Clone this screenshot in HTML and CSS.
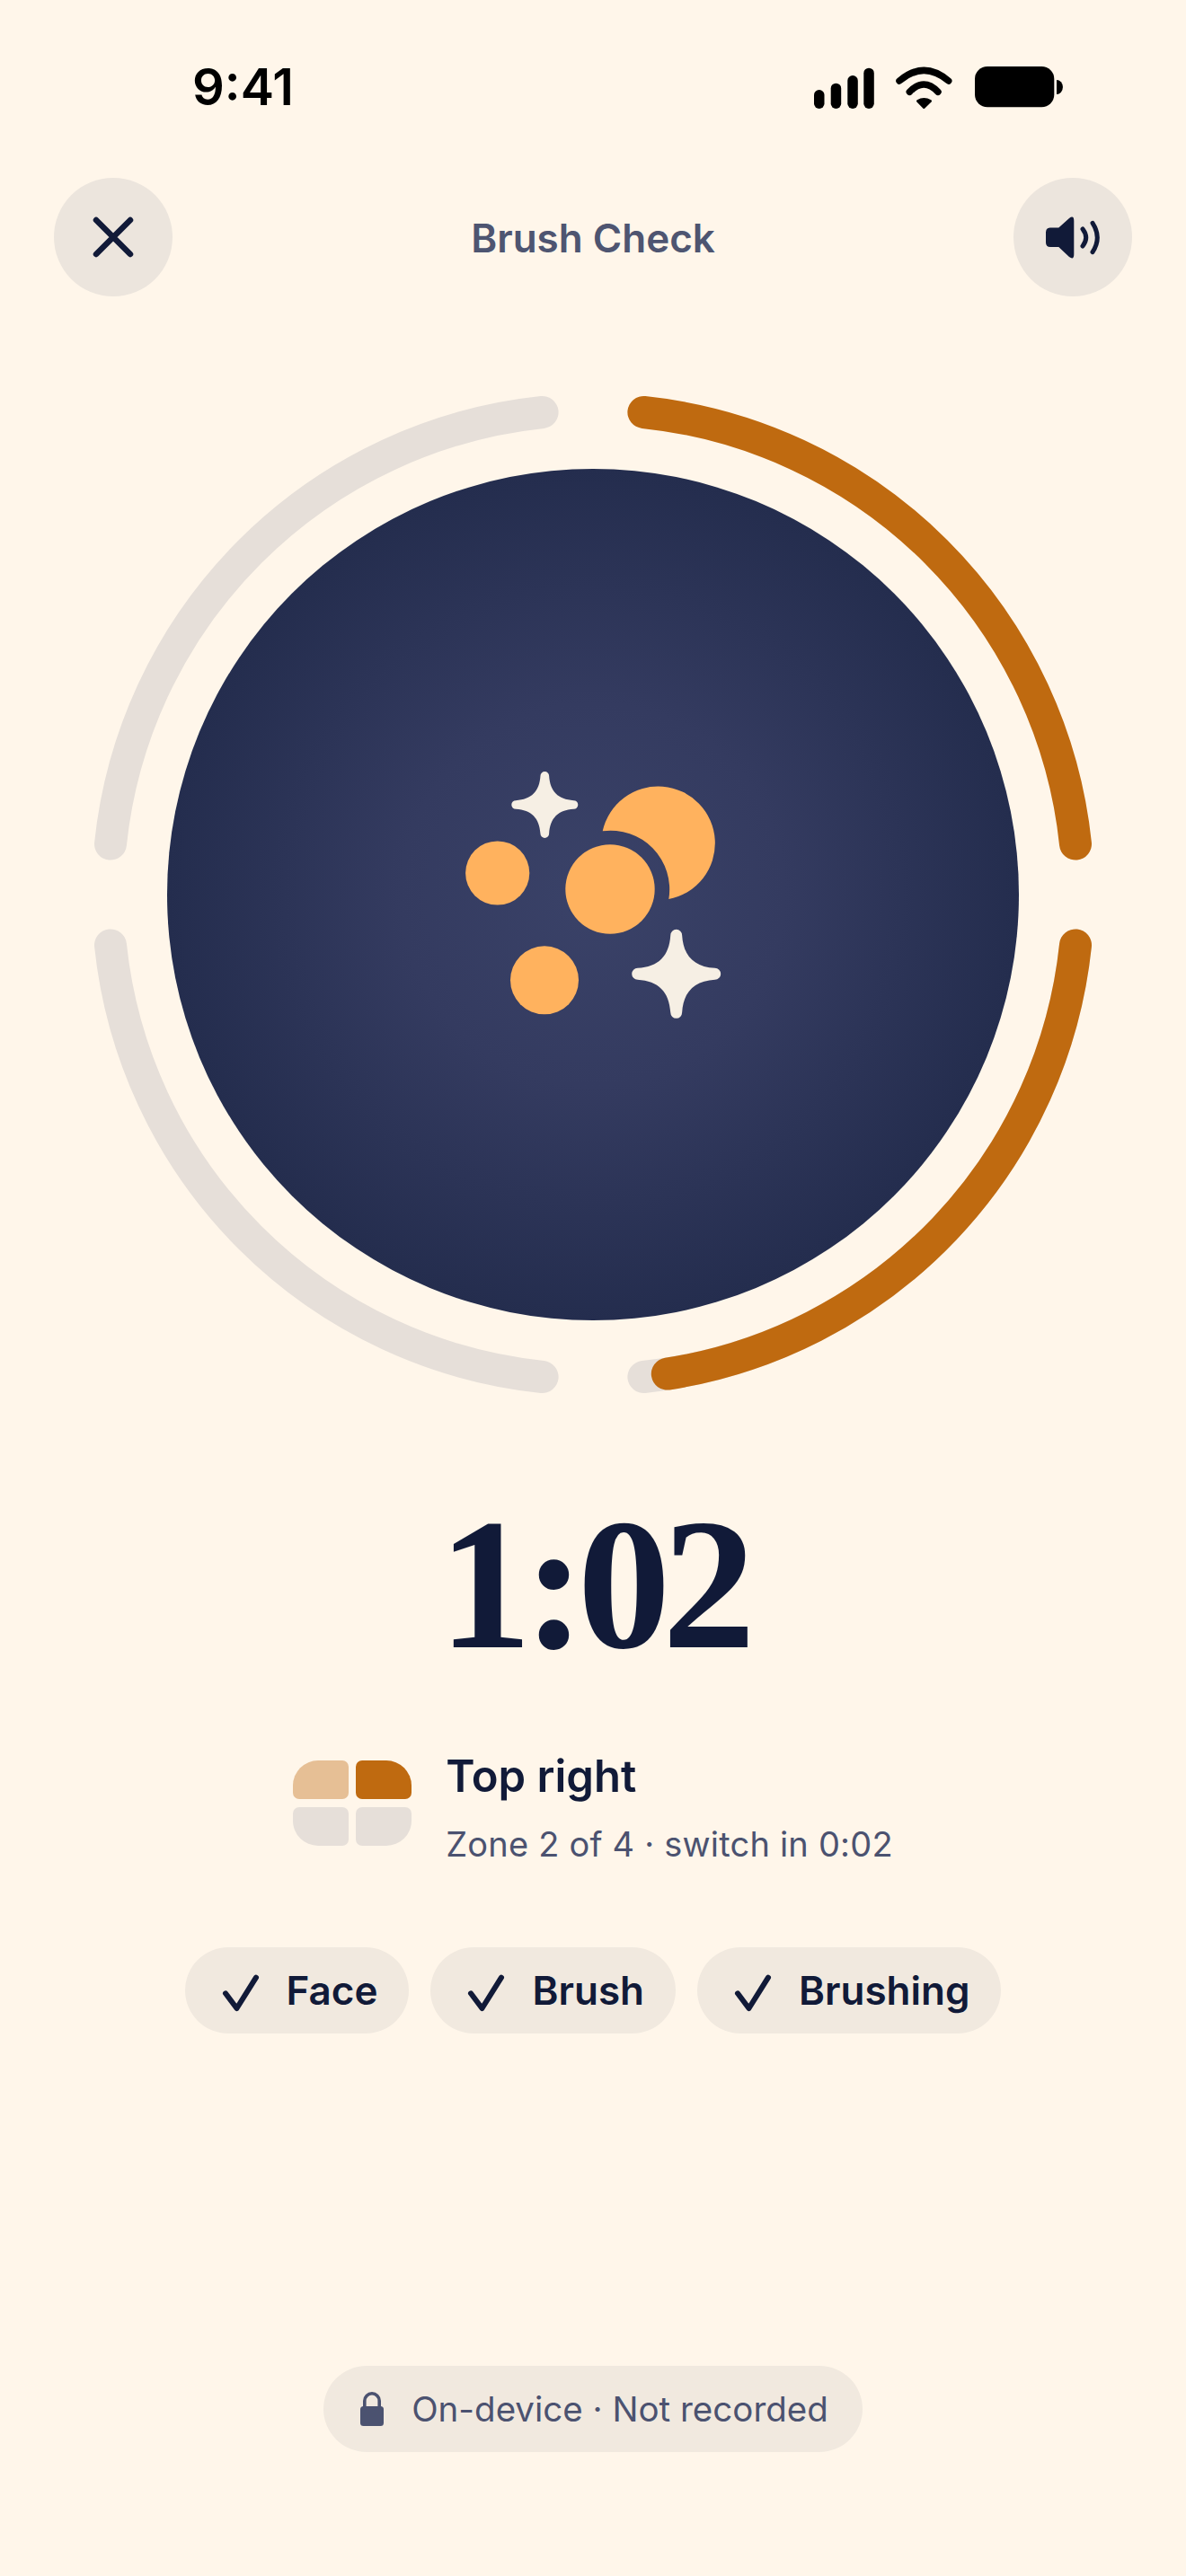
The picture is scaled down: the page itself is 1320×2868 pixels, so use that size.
FILE: index.html
```html
<!DOCTYPE html>
<html lang="en">
<head>
<meta charset="utf-8">
<title>Brush Check</title>
<link rel="stylesheet" href="styles.css">
</head>
<body>
<main class="screen">
  <div class="status">
    <span class="time">9:41</span>
    <svg class="status-icons" viewBox="0 0 280 50" aria-hidden="true">
      <rect x="1" y="26" width="11.5" height="21" rx="5.7"/>
      <rect x="19.7" y="18.7" width="11.5" height="28.3" rx="5.7"/>
      <rect x="38.3" y="10" width="11.5" height="37" rx="5.7"/>
      <rect x="56.3" y="1.7" width="11.5" height="45.3" rx="5.7"/>
      <path class="wifi" d="M96,16 Q123.3,-7.2 150.7,16"/>
      <path class="wifi" d="M107.3,28.3 Q123.2,11.7 139,28.3"/>
      <path class="wifi-dot" d="M116.5,38.5 Q123.3,34.5 130.5,38.5 L123.3,45.5Z"/>
      <rect x="180" y="0" width="88.3" height="45.3" rx="14"/>
      <path d="M271,15 A6.5 7.5 0 0 1 271,31Z"/>
    </svg>
  </div>

  <header class="topbar">
    <button class="round" aria-label="Close">
      <svg class="round-icon" viewBox="0 0 132 132"><path class="stroke-ink" d="M47,47 L85,85 M85,47 L47,85"/></svg>
    </button>
    <h1 class="title">Brush Check</h1>
    <button class="round" aria-label="Sound">
      <svg class="round-icon" viewBox="0 0 132 132">
        <path class="fill-ink" d="M41,55.5 H50.3 L62,45 Q67.3,41 67.3,48 V85 Q67.3,92 62,88 L50.3,77 H41 Q36,77 36,72 V60.5 Q36,55.5 41,55.5Z"/>
        <path class="wave" d="M77,57 Q84.4,66.7 77,76"/>
        <path class="wave" d="M88,50.3 Q98.6,66.7 88,82.7"/>
      </svg>
    </button>
  </header>

  <svg class="dial" viewBox="0 0 1116 1116" role="img" aria-label="Brushing progress">
    <defs>
      <radialGradient id="disc">
        <stop offset="0" stop-color="#3a4268"/>
        <stop offset="0.45" stop-color="#343b60"/>
        <stop offset="1" stop-color="#242d4e"/>
      </radialGradient>
      <path id="star" d="M-.13,-.87 A.13 .13 0 0 1 .13,-.87 C.16,-.4 .4,-.16 .87,-.13 A.13 .13 0 0 1 .87,.13 C.4,.16 .16,.4 .13,.87 A.13 .13 0 0 1 -.13,.87 C-.16,.4 -.4,.16 -.87,.13 A.13 .13 0 0 1 -.87,-.13 C-.4,-.16 -.16,-.4 -.13,-.87Z"/>
    </defs>
    <path class="track" d="M21,501.6 A540 540 0 0 1 501.6,21"/>
    <path class="track" d="M501.6,1095 A540 540 0 0 1 21,614.4"/>
    <path class="track" d="M1095,614.4 A540 540 0 0 1 614.4,1095"/>
    <path class="done" d="M614.4,21 A540 540 0 0 1 1095,501.6"/>
    <path class="done" d="M1095,614.4 A540 540 0 0 1 640.8,1091.6"/>
    <circle cx="558" cy="558" r="474" fill="url(#disc)"/>
    <g transform="translate(-102 -438)">
      <circle class="bubble" cx="553.7" cy="972" r="35.6"/>
      <circle class="bubble" cx="679" cy="990" r="49.7"/>
      <circle class="bubble" cx="606" cy="1091.3" r="38"/>
      <path class="bubble" d="M670.7,925.3 A63.3 63.3 0 1 1 744.3,1001 A65.5 65.5 0 0 0 670.7,925.3Z"/>
      <use href="#star" class="sparkle" transform="translate(606.3 896) scale(37)"/>
      <use href="#star" class="sparkle" transform="translate(752.7 1084.3) scale(49.5)"/>
    </g>
  </svg>

  <div class="timer">1:02</div>

  <section class="zone">
    <div class="quads" aria-hidden="true">
      <span class="quad tl"></span>
      <span class="quad tr"></span>
      <span class="quad bl"></span>
      <span class="quad br"></span>
    </div>
    <div class="zone-text">
      <div class="zone-name">Top right</div>
      <div class="zone-sub">Zone 2 of 4 · switch in 0:02</div>
    </div>
  </section>

  <ul class="chips">
    <li class="chip"><svg class="check" viewBox="0 0 48 48"><path d="M9,27.3 L21.5,44 L43,9.7"/></svg>Face</li>
    <li class="chip"><svg class="check" viewBox="0 0 48 48"><path d="M9,27.3 L21.5,44 L43,9.7"/></svg>Brush</li>
    <li class="chip"><svg class="check" viewBox="0 0 48 48"><path d="M9,27.3 L21.5,44 L43,9.7"/></svg>Brushing</li>
  </ul>

  <footer class="privacy">
    <svg class="lock" viewBox="0 0 26 38" aria-hidden="true">
      <path class="shackle" d="M4.8,18 V10 A8.2 8.2 0 0 1 21.2,10 V18"/>
      <rect x="0" y="16" width="26" height="22" rx="3.5"/>
    </svg>
    <span>On-device · Not recorded</span>
  </footer>
</main>
</body>
</html>
```

FILE: styles.css
```css
* { box-sizing: border-box; }
html, body { margin: 0; padding: 0; }
body { background: #fff6ea; font-family: Inter, "Liberation Sans", sans-serif; color: #111a38; }

.screen {
  width: 1320px;
  height: 2868px;
  display: flex;
  flex-direction: column;
  align-items: center;
  overflow: hidden;
}

.status {
  width: 100%;
  height: 198px;
  padding: 74px 135px 0 214px;
  display: flex;
  justify-content: space-between;
  align-items: flex-start;
}
.time { font-size: 56px; font-weight: 600; line-height: 46px; color: #000; }
.status-icons { width: 280px; height: 50px; fill: #000; }
.wifi { fill: none; stroke: #000; stroke-width: 7.5; stroke-linecap: round; }
.wifi-dot { stroke: #000; stroke-width: 3; stroke-linejoin: round; }

.topbar {
  width: 100%;
  padding: 0 60px;
  display: flex;
  justify-content: space-between;
  align-items: center;
}
.round {
  width: 132px;
  height: 132px;
  padding: 0;
  border: 0;
  border-radius: 50%;
  background: #ece5dd;
  display: flex;
}
.round-icon { width: 132px; height: 132px; }
.title { margin: 2px 0 0; font-size: 44px; font-weight: 600; color: #4e5571; line-height: 56px; }
.stroke-ink { fill: none; stroke: #111a38; stroke-width: 6.5; stroke-linecap: round; }
.fill-ink { fill: #111a38; }
.wave { fill: none; stroke: #111a38; stroke-width: 5; stroke-linecap: round; }

.dial { width: 1116px; height: 1116px; margin-top: 108px; flex: none; }
.track, .done { fill: none; stroke-width: 36; stroke-linecap: round; }
.track { stroke: #e6dfd9; }
.done { stroke: #bf6a10; }
.bubble { fill: #ffb25e; }
.sparkle { fill: #f6efe4; }

.timer {
  margin-top: 91px;
  height: 240px;
  font-family: "Liberation Serif", serif;
  font-weight: 700;
  font-size: 207px;
  line-height: 240px;
  letter-spacing: -9px;
  color: #111a38;
}

.zone {
  margin-top: 64px;
  display: flex;
  align-items: center;
  gap: 38px;
}
.quads {
  width: 132px;
  margin-bottom: 11px;
  display: grid;
  grid-template-columns: 62px 62px;
  grid-template-rows: 43px 43px;
  gap: 9px 8px;
}
.quad { display: block; }
.tl { background: #e6bf95; border-radius: 28px 7px 7px 7px; }
.tr { background: #bf6a10; border-radius: 7px 28px 7px 7px; }
.bl { background: #e6dfd9; border-radius: 7px 7px 7px 28px; }
.br { background: #e6dfd9; border-radius: 7px 7px 28px 7px; }
.zone-text { display: flex; flex-direction: column; gap: 23px; }
.zone-name { font-size: 49px; font-weight: 600; line-height: 58px; }
.zone-sub { font-size: 38px; font-weight: 400; line-height: 47px; color: #4b5270; letter-spacing: 0.2px; }

.chips {
  list-style: none;
  margin: 91px 0 0;
  padding: 0;
  display: flex;
  gap: 24px;
}
.chip {
  height: 96px;
  padding: 0 35px 0 36px;
  border-radius: 48px;
  background: #f1e9df;
  display: flex;
  align-items: center;
  gap: 29px;
  font-size: 44px;
  font-weight: 600;
}
.check { width: 48px; height: 48px; fill: none; stroke: #111a38; stroke-width: 6; stroke-linecap: round; stroke-linejoin: round; }

.privacy {
  margin-top: auto;
  margin-bottom: 138px;
  height: 96px;
  padding: 0 38px 0 41px;
  border-radius: 48px;
  background: #f1e9df;
  display: flex;
  align-items: center;
  gap: 31px;
  font-size: 38.5px;
  color: #4b5270;
}
.lock { width: 26px; height: 38px; fill: #4b5270; }
.shackle { fill: none; stroke: #4b5270; stroke-width: 3.6; }
```
